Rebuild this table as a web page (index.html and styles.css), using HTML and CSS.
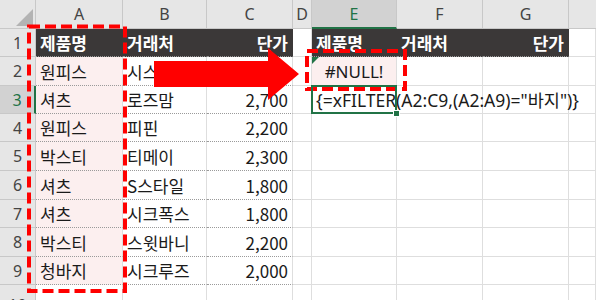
FILE: index.html
```html
<!DOCTYPE html>
<html lang="ko">
<head>
<meta charset="utf-8">
<link rel="stylesheet" href="styles.css">
</head>
<body>
<div class="wrap">
  <div class="sheet">
    <!-- column headers -->
    <div class="ch corner"><svg width="36" height="29" viewBox="0 0 36 29"><polygon points="33,9 33,26 16,26" fill="#b3b3b3"/></svg></div>
    <div class="ch">A</div>
    <div class="ch">B</div>
    <div class="ch">C</div>
    <div class="ch">D</div>
    <div class="ch sel">E</div>
    <div class="ch">F</div>
    <div class="ch">G</div>
    <div class="ch last"></div>

    <!-- row 1 -->
    <div class="rh">1</div>
    <div class="c dark">제품명</div>
    <div class="c dark">거래처</div>
    <div class="c dark num">단가</div>
    <div class="c"></div>
    <div class="c dark">제품명</div>
    <div class="c dark">거래처</div>
    <div class="c dark num">단가</div>
    <div class="c"></div>

    <!-- row 2 -->
    <div class="rh">2</div>
    <div class="c pink t">원피스</div>
    <div class="c t">시스</div>
    <div class="c t num">2,700</div>
    <div class="c"></div>
    <div class="c pink err">#NULL!</div>
    <div class="c"></div>
    <div class="c"></div>
    <div class="c"></div>

    <!-- row 3 -->
    <div class="rh rsel">3</div>
    <div class="c pink t">셔츠</div>
    <div class="c t">로즈맘</div>
    <div class="c t num">2,700</div>
    <div class="c"></div>
    <div class="c active"><span class="formula">{=xFILTER(A2:C9,(A2:A9)="바지")}</span></div>
    <div class="c"></div>
    <div class="c"></div>
    <div class="c"></div>

    <!-- row 4 -->
    <div class="rh">4</div>
    <div class="c pink t">원피스</div>
    <div class="c t">피핀</div>
    <div class="c t num">2,200</div>
    <div class="c"></div><div class="c"></div><div class="c"></div><div class="c"></div><div class="c"></div>

    <!-- row 5 -->
    <div class="rh">5</div>
    <div class="c pink t">박스티</div>
    <div class="c t">티메이</div>
    <div class="c t num">2,300</div>
    <div class="c"></div><div class="c"></div><div class="c"></div><div class="c"></div><div class="c"></div>

    <!-- row 6 -->
    <div class="rh">6</div>
    <div class="c pink t">셔츠</div>
    <div class="c t">S스타일</div>
    <div class="c t num">1,800</div>
    <div class="c"></div><div class="c"></div><div class="c"></div><div class="c"></div><div class="c"></div>

    <!-- row 7 -->
    <div class="rh">7</div>
    <div class="c pink t">셔츠</div>
    <div class="c t">시크폭스</div>
    <div class="c t num">1,800</div>
    <div class="c"></div><div class="c"></div><div class="c"></div><div class="c"></div><div class="c"></div>

    <!-- row 8 -->
    <div class="rh">8</div>
    <div class="c pink t">박스티</div>
    <div class="c t">스윗바니</div>
    <div class="c t num">2,200</div>
    <div class="c"></div><div class="c"></div><div class="c"></div><div class="c"></div><div class="c"></div>

    <!-- row 9 -->
    <div class="rh">9</div>
    <div class="c pink t">청바지</div>
    <div class="c t">시크루즈</div>
    <div class="c t num">2,000</div>
    <div class="c"></div><div class="c"></div><div class="c"></div><div class="c"></div><div class="c"></div>

    <!-- row 10 -->
    <div class="rh r10">10</div>
    <div class="c"></div><div class="c"></div><div class="c"></div><div class="c"></div><div class="c"></div><div class="c"></div><div class="c"></div><div class="c"></div>
  </div>

  <svg class="overlay" width="596" height="300" viewBox="0 0 596 300">
    <rect x="29" y="26.5" width="96" height="264.5" fill="none" stroke="#ff0000" stroke-width="4" stroke-dasharray="11 5"/>
    <rect x="307" y="51" width="98" height="38" fill="none" stroke="#ff0000" stroke-width="4" stroke-dasharray="11 5"/>
    <polygon points="154,61 268,61 268,48 299,74 268,100 268,87 154,87" fill="#ff0000"/>
  </svg>
</div>
</body>
</html>
```
FILE: styles.css
```css
html, body {
  margin: 0;
  padding: 0;
  background: #ffffff;
}
.wrap {
  position: relative;
  width: 596px;
  height: 300px;
  overflow: hidden;
}
.sheet {
  display: grid;
  grid-template-columns: 36px 87px 84px 86px 19px 85px 86px 86px 1fr;
  grid-template-rows: 29px 28px 29px 28px 28px 29px 29px 28px 29px 28px 30px;
  font-family: "Noto Sans CJK KR", "Noto Sans", sans-serif;
  font-size: 17px;
  color: #1a1a1a;
}
.ch {
  box-sizing: border-box;
  background: #e6e6e6;
  border-right: 1px solid #c8c8c8;
  border-bottom: 1px solid #c8c8c8;
  color: #444444;
  display: flex;
  align-items: center;
  justify-content: center;
  font-family: "Noto Sans", "Liberation Sans", sans-serif;
  font-size: 16px;
}
.ch.corner {
  padding: 0;
  display: block;
}
.ch.corner svg { display: block; }
.ch.last { border-right: none; }
.ch.sel {
  background: #d2d2d2;
  color: #217346;
  border-bottom: 2px solid #217346;
}
.rh {
  box-sizing: border-box;
  background: #e6e6e6;
  border-right: 1px solid #c8c8c8;
  border-bottom: 1px solid #c8c8c8;
  color: #444444;
  display: flex;
  align-items: center;
  justify-content: center;
  font-family: "Noto Sans", "Liberation Sans", sans-serif;
  font-size: 16px;
}
.rh.r10 {
  align-items: flex-end;
  line-height: 18px;
}
.rh.rsel {
  background: #d2d2d2;
  color: #217346;
  border-right: 2px solid #217346;
}
.c {
  box-sizing: border-box;
  border-right: 1px solid #dedede;
  border-bottom: 1px solid #dedede;
  display: flex;
  align-items: center;
  padding: 0 4px;
  white-space: nowrap;
  min-width: 0;
}
.c.t {
  border-bottom: 1px dotted #9a9a9a;
}
.c.dark {
  background: #3b3838;
  color: #ffffff;
  font-weight: 700;
  border-right-color: #3b3838;
  border-bottom: 1px dotted #9a9a9a;
}
.c.num {
  justify-content: flex-end;
}
.c.pink {
  background: #fcefef;
}
.c.err {
  position: relative;
  justify-content: center;
  font-family: "Noto Sans", "Liberation Sans", sans-serif;
}
.c.err::before {
  content: "";
  position: absolute;
  left: 0;
  top: 0;
  border-top: 7px solid #217346;
  border-right: 7px solid transparent;
}
.c.active {
  position: relative;
  z-index: 1;
  overflow: visible;
}
.c.active::after {
  content: "";
  position: absolute;
  left: -1px;
  top: -1px;
  right: -1px;
  bottom: -1px;
  border: 2px solid #217346;
}
.c.active::before {
  content: "";
  position: absolute;
  right: -4px;
  bottom: -4px;
  width: 5px;
  height: 5px;
  background: #217346;
  border: 1px solid #ffffff;
  z-index: 2;
}
.formula {
  font-family: "Noto Sans", "Noto Sans CJK KR", sans-serif;
  font-size: 17.5px;
  color: #1a1a1a;
}
.overlay {
  position: absolute;
  left: 0;
  top: 0;
  pointer-events: none;
}
```
